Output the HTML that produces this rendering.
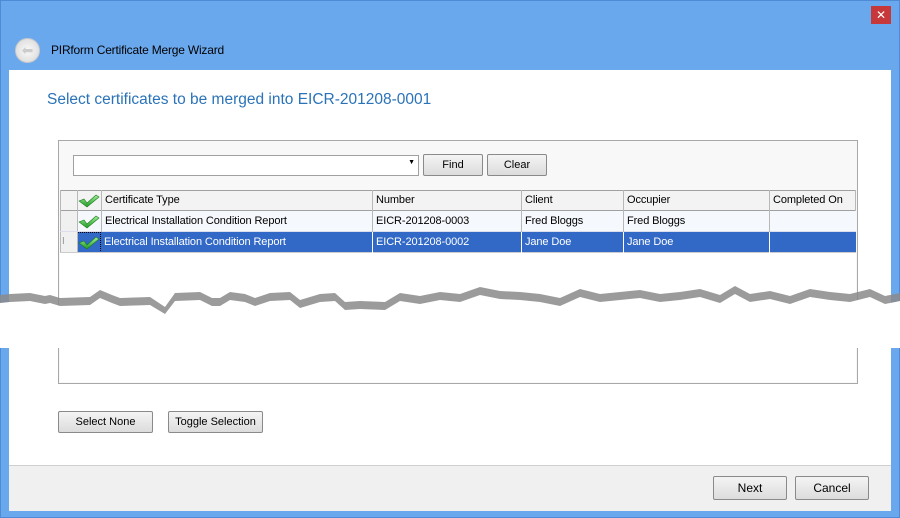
<!DOCTYPE html>
<html><head><style>
body{margin:0;width:900px;height:518px;position:relative;overflow:hidden;background:#6aa8ee;font-family:"Liberation Sans",sans-serif;font-size:11px;color:#000}
.a{position:absolute}
.btn{position:absolute;border:1px solid #8a8a8a;border-radius:2px;background:linear-gradient(#f4f4f4,#dcdcdc);text-align:center;box-sizing:border-box;font-size:11px}
.cell{position:absolute;box-sizing:border-box;border-right:1px solid #b8b8b8;padding-left:3px;line-height:21px;white-space:nowrap;overflow:hidden;letter-spacing:-0.1px}
</style></head><body>
<div class="a" style="left:0;top:0;width:900px;height:518px;border:1px solid #4f8ad6;box-sizing:border-box"></div>
<div class="a" style="left:871px;top:6px;width:20px;height:18px;background:#c7383a;color:#fff;text-align:center;line-height:18px;font-size:12px">✕</div>
<div class="a" style="left:15px;top:38px;width:25px;height:25px;border-radius:50%;background:radial-gradient(#fafafa,#d6d6d6);border:1px solid #c8c8c8;box-sizing:border-box;color:#ccc;text-align:center;line-height:23px;font-size:14px">⬅</div>
<div class="a" style="left:51px;top:43px;font-size:12px;letter-spacing:-0.2px">PIRform Certificate Merge Wizard</div>
<div class="a" style="left:9px;top:70px;width:882px;height:440px;background:#fff"></div>
<div class="a" style="left:9px;top:465px;width:882px;height:45px;background:#f0f0f0;border-top:1px solid #cfcfcf"></div>
<div class="a" style="left:47px;top:91px;font-size:15.5px;color:#2a73b8">Select certificates to be merged into EICR-201208-0001</div>
<div class="a" style="left:58px;top:140px;width:800px;height:244px;border:1px solid #a8a8a8;box-sizing:border-box;background:#f8f8f8"></div>
<div class="a" style="left:60px;top:190px;width:796px;height:192px;background:#fff"></div>
<div class="a" style="left:73px;top:155px;width:346px;height:21px;border:1px solid #a0a0a0;background:#fff;box-sizing:border-box"><span class="a" style="right:3px;top:3px;font-size:7px">▼</span></div>
<div class="btn" style="left:423px;top:154px;width:60px;height:22px;line-height:20px">Find</div>
<div class="btn" style="left:487px;top:154px;width:60px;height:22px;line-height:20px">Clear</div>
<div class="a" style="left:60px;top:190px;width:796px;height:21px;background:#f3f3f3;border-top:1px solid #a0a0a0;border-bottom:1px solid #a0a0a0;box-sizing:border-box"></div>
<div class="a" style="left:60px;top:211px;width:796px;height:21px;background:#f5f8fc"></div>
<div class="a" style="left:101px;top:232px;width:755px;height:21px;background:#3268c6"></div>
<div class="a" style="left:60px;top:232px;width:41px;height:21px;background:#f0f0f0"></div>
<div class="a" style="left:77px;top:232px;width:24px;height:21px;background:#3268c6;outline:1px dotted #000;outline-offset:-1px"></div>
<div class="a" style="left:62px;top:236px;color:#999;font-size:10px">I</div>
<div class="a" style="left:60px;top:211px;width:17px;height:21px;background:#f0f0f0"></div>
<svg class="a" style="left:0;top:0" width="900" height="518">
<defs><linearGradient id="g" x1="0" y1="0" x2="0" y2="1"><stop offset="0" stop-color="#9ff09a"/><stop offset="1" stop-color="#1e9a22"/></linearGradient></defs>
<g fill="url(#g)" stroke="#1d7a1d" stroke-width=".6">
<path d="M79 201 l5 -2 l3 4 l9 -8 l3 2 l-12 10z"/>
<path d="M79 222 l5 -2 l3 4 l9 -8 l3 2 l-12 10z"/>
<path d="M79 243 l5 -2 l3 4 l9 -8 l3 2 l-12 10z"/>
</g>
<g stroke="#b8b8b8"><line x1="77.5" y1="190" x2="77.5" y2="253"/><line x1="60.5" y1="190" x2="60.5" y2="253"/><line x1="60" y1="231.5" x2="856" y2="231.5" stroke="#dde"/><line x1="60" y1="252.5" x2="856" y2="252.5" stroke="#ccc"/></g>
</svg>
<div class="cell" style="left:101px;top:190px;width:272px;border-left:1px solid #b8b8b8">Certificate Type</div>
<div class="cell" style="left:373px;top:190px;width:149px">Number</div>
<div class="cell" style="left:522px;top:190px;width:102px">Client</div>
<div class="cell" style="left:624px;top:190px;width:146px">Occupier</div>
<div class="cell" style="left:770px;top:190px;width:86px">Completed On</div>
<div class="cell" style="left:101px;top:211px;width:272px;border-left:1px solid #b8b8b8">Electrical Installation Condition Report</div>
<div class="cell" style="left:373px;top:211px;width:149px">EICR-201208-0003</div>
<div class="cell" style="left:522px;top:211px;width:102px">Fred Bloggs</div>
<div class="cell" style="left:624px;top:211px;width:146px">Fred Bloggs</div>
<div class="cell" style="left:770px;top:211px;width:86px"></div>
<div class="cell" style="left:101px;top:232px;width:272px;color:#fff;border-color:#fff">Electrical Installation Condition Report</div>
<div class="cell" style="left:373px;top:232px;width:149px;color:#fff;border-color:#fff">EICR-201208-0002</div>
<div class="cell" style="left:522px;top:232px;width:102px;color:#fff;border-color:#fff">Jane Doe</div>
<div class="cell" style="left:624px;top:232px;width:146px;color:#fff;border-color:#fff">Jane Doe</div>
<div class="cell" style="left:770px;top:232px;width:86px;border-color:#fff"></div>
<svg class="a" style="left:0;top:280px" width="900" height="75">
<path fill="#8a8a8a" opacity=".85" d="M0 15 L10 14 L30 13 L45 16 L50 15 L60 18 L90 17 L100 10 L112 15 L120 18 L150 17 L165 27 L175 13 L200 12 L212 18 L220 18 L230 12 L245 14 L255 18 L270 13 L290 12 L300 20 L320 14 L335 13 L345 22 L360 21 L385 22 L400 13 L420 16 L440 12 L460 14 L480 7 L500 11 L520 12 L540 14 L560 18 L580 9 L600 14 L620 12 L640 10 L660 14 L680 12 L700 9 L720 15 L735 6 L750 14 L770 11 L790 16 L810 9 L830 12 L850 14 L870 9 L885 16 L900 13 L900 36 L0 36Z"/>
<path fill="#fff" d="M0 23 L10 22 L30 21 L45 24 L50 23 L60 26 L90 25 L100 18 L112 23 L120 26 L150 25 L165 34 L175 21 L200 20 L212 26 L220 26 L230 20 L245 22 L255 26 L270 21 L290 20 L300 28 L320 22 L335 21 L345 30 L360 29 L385 30 L400 21 L420 24 L440 20 L460 22 L480 15 L500 19 L520 20 L540 22 L560 26 L580 17 L600 22 L620 20 L640 18 L660 22 L680 20 L700 17 L720 23 L735 14 L750 22 L770 19 L790 24 L810 17 L830 20 L850 22 L870 17 L885 24 L900 21 L900 68 L0 68Z"/>
</svg>
<div class="btn" style="left:58px;top:411px;width:95px;height:22px;line-height:20px">Select None</div>
<div class="btn" style="left:168px;top:411px;width:95px;height:22px;line-height:20px">Toggle Selection</div>
<div class="btn" style="left:713px;top:476px;width:74px;height:24px;line-height:22px;font-size:12px">Next</div>
<div class="btn" style="left:795px;top:476px;width:74px;height:24px;line-height:22px;font-size:12px">Cancel</div>
</body></html>
